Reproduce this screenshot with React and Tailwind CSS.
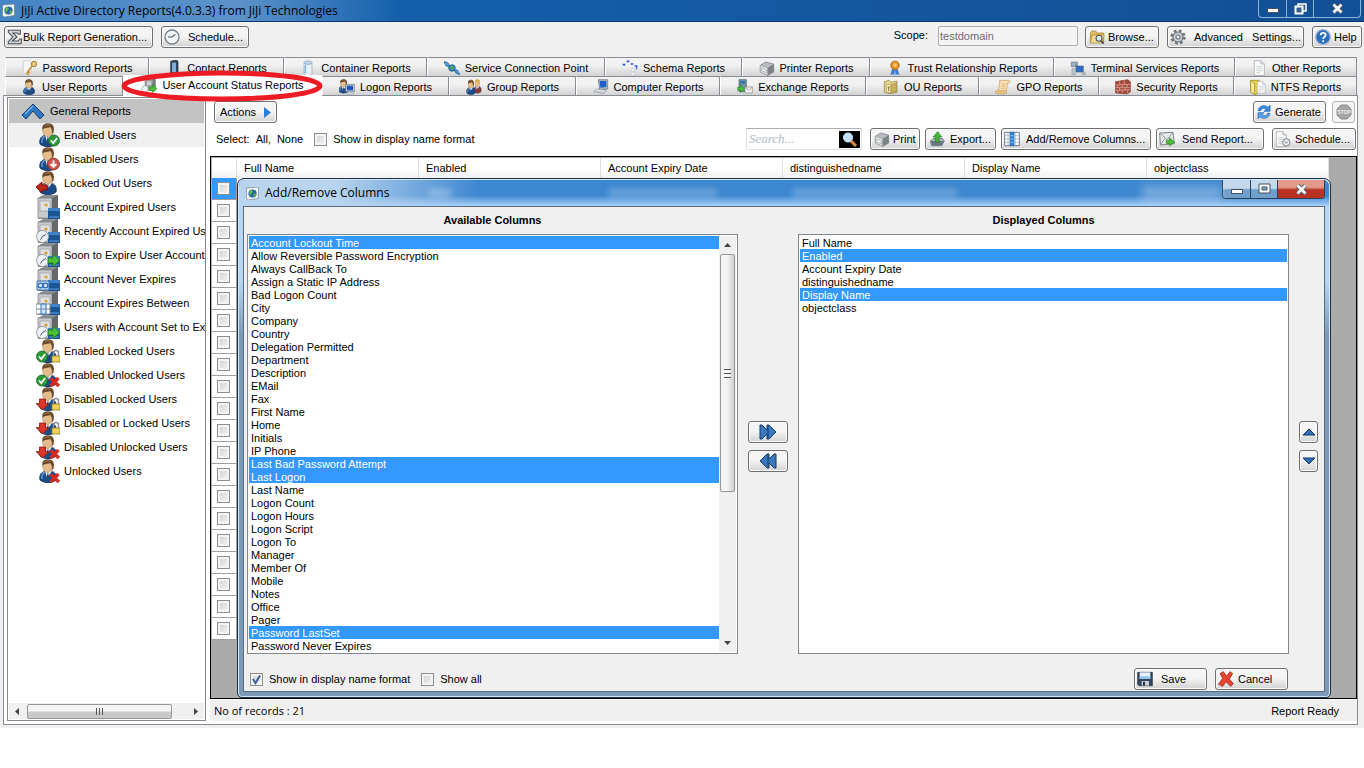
import React, { useState } from 'react';

/* ---------- icons ---------- */

const Svg = ({ size = 16, box = 24, className = '', children }) => (
  <svg width={size} height={size} viewBox={`0 0 ${box} ${box}`} className={`shrink-0 ${className}`} aria-hidden="true">
    {children}
  </svg>
);

const Person = ({ t = '', hair = '#6b4a2b', coat = '#1d4b86' }) => (
  <g transform={t}>
    <path d="M4 21c-1-5 1-8 6-9h5c4 1 6 4 5 9-4 3.500-12 3.500-16 0z" fill={coat} stroke="#0d2d57" strokeWidth=".8" />
    <path d="M6 20c-.5-4 1-6 3-7" stroke="#5b8fca" strokeWidth="1.800" fill="none" />
    <path d="M9 12l2 7 5-7-3-1z" fill="#f3f6fa" />
    <path d="M12 13l-1.500 5 1 3 1.500-3z" fill="#27466f" />
    <ellipse cx="11.500" cy="7.500" rx="4.800" ry="6" fill="#e5bd8c" stroke="#a9804f" strokeWidth=".6" />
    <path d="M6.500 7C5.500 2.500 8 .3 12 .3c4.500 0 7 3 5.500 9.200l-1.500 2c.5-4-.5-6.500-2-7.500-2.500 1.500-6 0-7.500 3z" fill={hair} />
    <path d="M9 2.500c2-1.200 4-1 5.500 0" stroke="#a57c50" strokeWidth="1" fill="none" />
  </g>
);

const Cabinet = () => (
  <g>
    <path d="M2 3l5-3h15v22l-4 2H2z" fill="#8c8f92" />
    <path d="M2 3h14v20H2z" fill="#c9ccce" stroke="#777a7d" strokeWidth=".7" />
    <path d="M16 3l6-3v21l-6 3z" fill="#64686b" />
    <path d="M4 6h10v10H4z" fill="#dfe1e2" stroke="#9a9d9f" strokeWidth=".7" />
    <circle cx="10" cy="10" r="1.600" fill="#d9a21f" />
    <path d="M12 13h12v11H12z" fill="#1c5594" />
    <path d="M12 13h12v3H12z" fill="#3f83c6" />
    <path d="M13 22h10" stroke="#5c9ada" />
  </g>
);

const CheckBadge = ({ x, y }) => (
  <g>
    <circle cx={x} cy={y} r="5.500" fill="#2f9a3a" stroke="#1a6a25" strokeWidth=".8" />
    <path d={`M${x - 3} ${y}l2.200 2.500 4-5`} stroke="#fff" strokeWidth="1.800" fill="none" />
  </g>
);
const DownBadge = ({ x, y }) => (
  <g>
    <circle cx={x} cy={y} r="6" fill="#c9534d" stroke="#8e2d29" strokeWidth=".8" />
    <path d={`M${x} ${y - 3.5}v6M${x - 3} ${y}l3 3 3-3`} stroke="#fff" strokeWidth="1.800" fill="none" />
  </g>
);
const RedDown = () => (
  <path d="M3.500 12h6v4.500H13L6.500 23 0 16.500h3.500z" fill="#d9372a" stroke="#8a1a12" strokeWidth=".8" />
);
const Lock = () => (
  <g>
    <path d="M17.500 17v-3a2.500 2.500 0 015 0v3" stroke="#8d9299" strokeWidth="1.500" fill="none" />
    <path d="M16 17h8v6h-8z" fill="#ecd35f" stroke="#9a7f1c" strokeWidth=".8" />
  </g>
);
const RedCross = () => <path d="M14.500 15.500l8.500 7.500M22.500 15l-8 8" stroke="#d42a20" strokeWidth="3.400" />;
const Clock = () => (
  <g>
    <circle cx="6.500" cy="17.500" r="6" fill="#eef1f3" stroke="#9aa1a7" />
    <path d="M6.500 17.500l3.500-2M6.500 17.500l-2 3" stroke="#4b5563" />
  </g>
);
const GreenRight = ({ t = '' }) => (
  <path transform={t} d="M12 15h5v-4l7 6.500-7 6V20h-5z" fill="#4bbf35" stroke="#1f7a17" strokeWidth=".8" />
);

const sideIcons = {
  enabled: <><Person /><CheckBadge x={18} y={17.5} /></>,
  disabled: <><Person /><DownBadge x={17.5} y={17} /></>,
  lockedOut: <><Person /><path d="M0 16l6-5v3h5v5H6v3z" fill="#c4261d" stroke="#7a120d" /></>,
  expired: <Cabinet />,
  recent: <><Cabinet /><Clock /></>,
  soon: <><Cabinet /><Clock /><GreenRight /></>,
  never: <><Cabinet /><path d="M1 14h12v9H1z" fill="#cfe0f2" stroke="#2f6cb0" /><circle cx="4.500" cy="18.500" r="2.400" fill="none" stroke="#2f6cb0" strokeWidth="1.300" /><circle cx="9.500" cy="18.500" r="2.400" fill="none" stroke="#2f6cb0" strokeWidth="1.300" /></>,
  between: <><Cabinet /><path d="M0 13h14v10H0z" fill="#fff" stroke="#7b8794" /><path d="M5 13h5v10H5z" fill="#cfe3fb" stroke="#2c72c7" /><path d="M0 18h14" stroke="#7b8794" /></>,
  enLocked: <><Person /><CheckBadge x={6} y={17.5} /><Lock /></>,
  enUnlocked: <><Person /><CheckBadge x={6} y={17.5} /><RedCross /></>,
  disLocked: <><Person /><RedDown /><Lock /></>,
  disUnlocked: <><Person /><RedDown /><RedCross /></>,
  unlocked: <><Person /><RedCross /></>,
};

const Monitor = ({ t = '' }) => (
  <g transform={t}>
    <path d="M10 8h13v11H10z" fill="#c4cad1" stroke="#6d7782" />
    <path d="M12 10h9v7h-9z" fill="#1f55c0" />
    <path d="M13 20h8l1 3H12z" fill="#dfe3e7" stroke="#8a929b" strokeWidth=".7" />
  </g>
);
const Page = ({ t = '' }) => (
  <g transform={t}>
    <path d="M5 1h10l5 5v17H5z" fill="#fafafa" stroke="#9aa0a6" />
    <path d="M15 1v5h5" fill="#e3e6e9" stroke="#9aa0a6" />
    <path d="M8 10h9M8 13h9M8 16h9M8 19h6" stroke="#b7bcc2" />
  </g>
);
const PrinterShape = () => (
  <g>
    <path d="M2 8l8-5 12 3v12l-9 5-11-5z" fill="#b8bcc0" stroke="#6f7478" />
    <path d="M2 8l11 4v11L2 18z" fill="#e4e6e8" stroke="#8b9094" strokeWidth=".7" />
    <path d="M13 12l9-6v12l-9 5z" fill="#7d8286" />
    <path d="M4 12l7 3v4l-7-3z" fill="#fff" stroke="#777" strokeWidth=".7" />
  </g>
);
const Folder = () => (
  <g>
    <path d="M2 6l2-3h6l2 3h10v14H2z" fill="#e2bc62" stroke="#9d7a28" />
    <path d="M5 9h18l-3 12H2z" fill="#f5dc94" stroke="#a9852e" />
  </g>
);

const tabIcons = {
  password: <><path d="M2 1h9l3 3v16H2z" fill="#f7f7f7" stroke="#c5c9cd" /><circle cx="18" cy="6" r="4" fill="#e8c67c" stroke="#9c7833" strokeWidth="1.400" /><path d="M15 9L7 20M9 17l3 2M7 20l3 2" stroke="#c89236" strokeWidth="2.600" fill="none" /></>,
  contact: <><path d="M7 2l8-2 3 2v20l-3 2H7z" fill="#33475c" stroke="#17222e" /><path d="M9 4h6v14H9z" fill="#7fb0da" /><path d="M9 20h6" stroke="#9fb0bf" strokeWidth="1.500" /></>,
  container: <><path d="M6 4v17c2 3 10 3 12 0V4z" fill="#e8f1f8" stroke="#8ea4b5" /><ellipse cx="12" cy="4" rx="6" ry="2.600" fill="#bcd9ee" stroke="#7f9bb0" /><path d="M8 8v12" stroke="#86b9dc" strokeWidth="2.400" /></>,
  service: <><path d="M0 2l6 2 3 6-6-1zM15 15l5 0 4 7-6-2z" fill="#4a9fd6" stroke="#18608f" /><circle cx="12" cy="12" r="5" fill="#2b83c3" stroke="#1b4f7b" /><path d="M9 10c3-3 5 0 6 1s-2 4-4 4z" fill="#56b04a" /></>,
  schema: <><path d="M1 7h4M7 2h4M13 6h4M19 9h4" stroke="#2f52e0" strokeWidth="2.600" /><path d="M22 9v5" stroke="#2f52e0" strokeWidth="1.600" /><path d="M14 13h5v4h-5zM14 19h5v4h-5z" fill="#f1f3f5" stroke="#c5ccd4" /></>,
  printer: <PrinterShape />,
  trust: <><path d="M8 12l-3 11 4-2 2 2 1-9 1 9 3-2 3 2-4-11z" fill="#3a7bd0" /><circle cx="12" cy="8" r="6.500" fill="#e0912a" stroke="#a55f10" /><circle cx="12" cy="8" r="3" fill="#f7c267" /></>,
  terminal: <><path d="M2 3h9v7H2z" fill="#9fb0bf" stroke="#66727d" /><path d="M8 7l10 7" stroke="#7c8792" strokeWidth="2" /><path d="M9 9h11v9H9z" fill="#2e6bc7" stroke="#5d6974" /><path d="M3 13h5v9H3zM18 19h5v3h-5z" fill="#c0c7ce" stroke="#79838c" strokeWidth=".7" /></>,
  other: <Page />,
  user: <Person />,
  status: <><path d="M6 2l4-2h12v20H6z" fill="#75797c" /><path d="M6 3h12v17H6z" fill="#a4a8ab" stroke="#666" strokeWidth=".7" /><path d="M8 6h8v7H8z" fill="#cfd2d4" stroke="#777" strokeWidth=".7" /><circle cx="6" cy="18" r="5" fill="#eef1f3" stroke="#9aa1a7" /><GreenRight /></>,
  logon: <><Person t="translate(-4 0) scale(.9)" /><Monitor /></>,
  group: <><Person t="translate(9 0) scale(.68 .9)" hair="#e0b84c" coat="#9c3326" /><Person t="translate(-2 1) scale(.78 .95)" /></>,
  computer: <><path d="M8 1l14 0v14l-12 1z" fill="#aeb6bf" stroke="#646d77" /><path d="M10 3h10v9l-9 1z" fill="#1f5fc8" /><path d="M1 19l5-4 14 2-4 5z" fill="#eceff1" stroke="#808890" /><path d="M5 18l11 2" stroke="#9aa2aa" /></>,
  exchange: <><path d="M3 1h11v18H3z" fill="#7594a3" stroke="#3e5763" /><path d="M5 3h7v4H5z" fill="#3577b5" /><path d="M12 12h11v9H12z" fill="#f1f1ee" stroke="#888" /><path d="M12 12l5.500 5 5.500-5" fill="none" stroke="#888" /><GreenRight t="translate(-10 -1) scale(.9)" /></>,
  ou: <><path d="M2 4l7-2 3 3 9-2v17l-12 2-7-2z" fill="#ead590" stroke="#8f7a35" /><path d="M5 8h7v13l-7-2z" fill="#f6ecc2" stroke="#9d8638" strokeWidth=".8" /><path d="M12 9l8-3v13l-8 2z" fill="#cdb35e" stroke="#8f7a35" strokeWidth=".8" /><path d="M7 12h3M8.500 12v6" stroke="#8a7a2c" strokeWidth="1.600" /></>,
  gpo: <><path d="M7 2h14c2 0 2 4 0 4h-2l-2 12H5L7 6z" fill="#f6dfb4" stroke="#c49a55" /><path d="M1 18h15c2 0 2 4 0 4H3c-2 0-3-2-2-4z" fill="#edc88a" stroke="#c49a55" /><path d="M10 8h6M9 11h6M9 14h6" stroke="#d2a866" /></>,
  security: <><path d="M1 4l18-3 4 3v15l-4 3L1 21z" fill="#a9493a" stroke="#74291e" /><path d="M1 9l22-1M1 13h22M1 17l22-1M7 3v6M14 2v6M4 9v4M11 9v4M18 8v5M7 13v4M15 13v4M4 17v4M11 17v4M19 17v4" stroke="#dcaaa0" strokeWidth="1.200" /></>,
  ntfs: <><path d="M1 2h13v18l-7 4-6-5z" fill="#ecd14c" stroke="#95801d" /><path d="M1 2l6 5v17l-6-5z" fill="#f8ea98" stroke="#95801d" /><Page t="translate(7 3) scale(.8)" /></>,
};

const AppIcon = () => (
  <Svg size={13}>
    <path d="M1 2l22-2v21l-19 3-3-3z" fill="#f4f6f7" stroke="#5a6a74" />
    <circle cx="12" cy="12" r="7.500" fill="#2166a8" />
    <path d="M7 7c3-3 6 0 5 3s-4 1-3 5-3-1-3-4zM14 13c3-2 5-1 4 2s-4 4-4 1z" fill="#6dbb3f" />
  </Svg>
);

const btnIcons = {
  bulk: <path d="M2 2h18v6h-3l-1-2H9l6 6-7 6h9l2-3h3l-1 7H2v-3l7-7-7-7z" fill="#d4d8db" stroke="#4a5056" strokeWidth="1.600" />,
  clock: <><circle cx="12" cy="12" r="10.500" fill="#f2f4f6" stroke="#7a828a" strokeWidth="2" /><path d="M6 12h6l5-4" stroke="#49515a" strokeWidth="1.600" fill="none" /></>,
  browse: <><Folder /><circle cx="15" cy="14" r="4.500" fill="#d8ebf8" stroke="#555" strokeWidth="1.600" /><path d="M18 18l4 4" stroke="#444" strokeWidth="2.400" /></>,
  gear: <><circle cx="12" cy="12" r="9.500" fill="none" stroke="#6d757c" strokeWidth="4" strokeDasharray="4 3.460" /><circle cx="12" cy="12" r="7.500" fill="#c5cbd0" stroke="#6d757c" strokeWidth="1.600" /><circle cx="12" cy="12" r="3" fill="#f0f0f0" stroke="#6d757c" strokeWidth="1.600" /></>,
  help: <><circle cx="12" cy="12" r="11" fill="#2a6fbd" stroke="#9db5cc" strokeWidth="2" /><path d="M8.500 9.500c0-5 7.500-4.500 7.500-.5 0 3-3.700 2.700-3.700 6M12.300 17v2.500" stroke="#fff" strokeWidth="2.600" fill="none" /></>,
  generate: <><path d="M3 10C4 3 13 0 18 5l3-3v9h-9l3-3c-4-3-7-1-8 2z" fill="#3a8be0" stroke="#1a5fae" /><path d="M21 14c-1 7-10 10-15 5l-3 3v-9h9l-3 3c4 3 7 1 8-2z" fill="#5aa6ee" stroke="#1a5fae" /></>,
  print: <PrinterShape />,
  exportOut: <><path d="M2 15l5-4h13l3 4-4 7H4z" fill="#a8b0b8" stroke="#59626b" /><path d="M2 15h17l4 0-4 7H4z" fill="#6d7a86" /><path d="M10 17V9H6l7-8 6 8h-4v8z" fill="#48b63a" stroke="#1f7a17" /></>,
  columns: <><path d="M1 2h22v20H1z" fill="#fff" stroke="#6c7b8b" strokeWidth="1.500" /><path d="M1 7h22M1 12h22M1 17h22M6 2v20M17 2v20" stroke="#9eabb8" /><path d="M9 2h6v20H9z" fill="#3587dc" stroke="#1c5ea8" /><path d="M9 7h6M9 12h6M9 17h6" stroke="#9cc8f4" /></>,
  send: <><path d="M1 3l20-1 2 17-21 2z" fill="#e6e8ea" stroke="#6d757c" strokeWidth="1.300" /><path d="M1 3l11 10L21 2M2 21l7-10M22 19l-8-8" stroke="#8a9299" fill="none" strokeWidth="1.300" /><GreenRight t="translate(-1 -1)" /></>,
  pageClock: <><Page t="translate(-3 0)" /><circle cx="17" cy="17" r="5.500" fill="#eef0f2" stroke="#7a828a" strokeWidth="1.500" /><path d="M14 16l3 2 3-2" stroke="#555" fill="none" /></>,
  save: <><path d="M1 2h22v20H3l-2-2z" fill="#34475c" stroke="#1a2735" /><path d="M4 2h16v10H4z" fill="#e6f1fa" /><path d="M4 8h16v4H4z" fill="#8fc3ec" /><path d="M7 15h11v7H7z" fill="#c5ccd2" /><path d="M9 16h3v6H9z" fill="#26323e" /></>,
  cancel: <path d="M3 4l5-3 5 7 5-7 4 3-5 8 6 7-4 4-7-7-5 7-6-3 6-9z" fill="#e8432e" stroke="#a82717" strokeWidth="1.200" />,
};

/* ---------- data ---------- */

const topTabs = [
  { label: 'Password Reports', icon: 'password', w: 'basis-[144px]' },
  { label: 'Contact Reports', icon: 'contact', w: 'basis-[135px]' },
  { label: 'Container Reports', icon: 'container', w: 'basis-[143px]' },
  { label: 'Service Connection Point', icon: 'service', w: 'basis-[178px]' },
  { label: 'Schema Reports', icon: 'schema', w: 'basis-[137px]' },
  { label: 'Printer Reports', icon: 'printer', w: 'basis-[128px]' },
  { label: 'Trust Relationship Reports', icon: 'trust', w: 'basis-[184px]' },
  { label: 'Terminal Services Reports', icon: 'terminal', w: 'basis-[181px]' },
  { label: 'Other Reports', icon: 'other', w: 'basis-[122px]' },
];

const bottomTabs = [
  { label: 'User Reports', icon: 'user', w: 'basis-[118px]' },
  { label: 'User Account Status Reports', icon: 'status', w: 'basis-[199px]' },
  { label: 'Logon Reports', icon: 'logon', w: 'basis-[127px]' },
  { label: 'Group Reports', icon: 'group', w: 'basis-[127px]' },
  { label: 'Computer Reports', icon: 'computer', w: 'basis-[144px]' },
  { label: 'Exchange Reports', icon: 'exchange', w: 'basis-[146px]' },
  { label: 'OU Reports', icon: 'ou', w: 'basis-[113px]' },
  { label: 'GPO Reports', icon: 'gpo', w: 'basis-[120px]' },
  { label: 'Security Reports', icon: 'security', w: 'basis-[135px]' },
  { label: 'NTFS Reports', icon: 'ntfs', w: 'basis-[123px]' },
];

const reports = [
  ['Enabled Users', 'enabled'],
  ['Disabled Users', 'disabled'],
  ['Locked Out Users', 'lockedOut'],
  ['Account Expired Users', 'expired'],
  ['Recently Account Expired Us', 'recent'],
  ['Soon to Expire User Account', 'soon'],
  ['Account Never Expires', 'never'],
  ['Account Expires Between', 'between'],
  ['Users with Account Set to Exp', 'soon'],
  ['Enabled Locked Users', 'enLocked'],
  ['Enabled Unlocked Users', 'enUnlocked'],
  ['Disabled Locked Users', 'disLocked'],
  ['Disabled or Locked Users', 'disLocked'],
  ['Disabled Unlocked Users', 'disUnlocked'],
  ['Unlocked Users', 'unlocked'],
];

const available = [
  'Account Lockout Time', 'Allow Reversible Password Encryption', 'Always CallBack To',
  'Assign a Static IP Address', 'Bad Logon Count', 'City', 'Company', 'Country',
  'Delegation Permitted', 'Department', 'Description', 'EMail', 'Fax', 'First Name', 'Home',
  'Initials', 'IP Phone', 'Last Bad Password Attempt', 'Last Logon', 'Last Name', 'Logon Count',
  'Logon Hours', 'Logon Script', 'Logon To', 'Manager', 'Member Of', 'Mobile', 'Notes', 'Office',
  'Pager', 'Password LastSet', 'Password Never Expires',
];

const displayed = ['Full Name', 'Enabled', 'Account Expiry Date', 'distinguishedname', 'Display Name', 'objectclass'];

const rows = Array.from({ length: 21 }, (_, i) => i);

/* ---------- small controls ---------- */

const Button = ({ icon, iconSize = 16, children, className = '', ...rest }) => (
  <button
    type="button"
    className={`flex h-[22px] shrink-0 items-center rounded-[3px] border border-[#707070] bg-linear-to-b from-[#f5f5f5] from-45% to-[#d2d2d2] whitespace-nowrap shadow-[inset_0_0_0_1px_#fafafa] ${className}`}
    {...rest}
  >
    {icon && <Svg size={iconSize}>{btnIcons[icon]}</Svg>}
    {children}
  </button>
);

const Checkbox = ({ id, label, defaultChecked, name }) => (
  <span className="flex items-center gap-[6px] whitespace-nowrap">
    <span className="grid">
      <input
        id={id}
        type="checkbox"
        aria-label={label ? undefined : name}
        defaultChecked={defaultChecked}
        className="peer col-start-1 row-start-1 size-[13px] appearance-none border border-[#8e8f8f] bg-linear-to-br from-[#cdd0d4] to-[#f6f6f6] shadow-[inset_0_0_0_2px_#f4f4f4]"
      />
      <svg viewBox="0 0 13 13" className="pointer-events-none invisible col-start-1 row-start-1 size-[13px] peer-checked:visible" aria-hidden="true">
        <path d="M3 6l2.500 4L10 2.500" fill="none" stroke="#3a5f9a" strokeWidth="2" />
      </svg>
    </span>
    {label && <label htmlFor={id}>{label}</label>}
  </span>
);

const Tab = ({ tab, active, onClick }) => (
  <button
    type="button"
    role="tab"
    aria-selected={active}
    onClick={onClick}
    className={`flex h-[19px] grow items-center justify-center gap-[5px] whitespace-nowrap ${tab.w} ${
      active
        ? 'relative -mt-px h-[21px] bg-white pb-[2px]'
        : 'border-t border-r border-l border-[#898c95] border-l-white bg-linear-to-b from-[#f2f2f2] from-40% to-[#d3d3d3] pt-px'
    }`}
  >
    <Svg>{tabIcons[tab.icon]}</Svg>
    {tab.label}
    {active && (
      <svg viewBox="0 0 203 32" preserveAspectRatio="none" className="pointer-events-none absolute -inset-x-[2px] -top-[5px] z-10 h-[32px] w-[203px]" aria-hidden="true">
        <ellipse cx="101" cy="16" rx="98" ry="13" fill="none" stroke="#ed1c24" strokeWidth="5" />
      </svg>
    )}
  </button>
);

const WindowButtons = ({ blue, maximized }) => (
  <div className={`flex self-start overflow-hidden rounded-b-[4px] border border-t-0 ${blue ? 'h-[19px] border-[#2b3f57]' : 'h-[18px] border-[#8fb2d8]'}`}>
    <button type="button" aria-label="Minimize" className={`flex w-[28px] items-center justify-center border-r pt-[4px] ${blue ? 'border-[#2b3f57] bg-linear-to-b from-[#c4d9ec] from-45% to-[#6f9fcb] to-55%' : 'border-[#8fb2d8]'}`}>
      <span className="h-[5px] w-[12px] border border-[#47525f] bg-white" />
    </button>
    <button type="button" aria-label={maximized ? 'Restore' : 'Maximize'} className={`flex w-[27px] items-center justify-center border-r ${blue ? 'border-[#2b3f57] bg-linear-to-b from-[#c4d9ec] from-45% to-[#6f9fcb] to-55%' : 'border-[#8fb2d8]'}`}>
      <svg width="13" height="12" viewBox="0 0 13 12" aria-hidden="true">
        {maximized ? (
          <>
            <path d="M4 1h8v7H4z" fill="#345f92" stroke="#fff" strokeWidth="1.500" />
            <path d="M1.500 3.500h7v7h-7z" fill="#345f92" stroke="#fff" strokeWidth="2" />
          </>
        ) : (
          <>
            <path d="M1 1h11v9H1z" fill="#fff" stroke="#47525f" />
            <path d="M4 4h5v3H4z" fill="#7da7cf" stroke="#47525f" />
          </>
        )}
      </svg>
    </button>
    <button type="button" aria-label="Close" className={`flex w-[46px] items-center justify-center ${blue ? 'bg-linear-to-b from-[#e39a8b] from-40% to-[#b83122] to-55%' : ''}`}>
      <svg width="13" height="11" viewBox="0 0 13 11" aria-hidden="true">
        <path d="M2.500 1.500l8 8M10.500 1.500l-8 8" stroke="#47525f" strokeWidth="4.500" />
        <path d="M2.500 1.500l8 8M10.500 1.500l-8 8" stroke="#fff" strokeWidth="2.800" />
      </svg>
    </button>
  </div>
);

const ListBox = ({ label, items, initial, scroll }) => {
  const [selected, setSelected] = useState(initial);

  const toggle = (item) => {
    setSelected(selected.includes(item) ? selected.filter((s) => s !== item) : [...selected, item]);
  };

  return (
    <section className="flex min-w-0 flex-1 flex-col">
      <h2 className="h-[27px] text-center leading-[27px] font-bold">{label}</h2>
      <div className="flex flex-1 border border-[#828790] bg-white p-px">
        <ul role="listbox" aria-label={label} aria-multiselectable="true" className="min-w-0 flex-1">
          {items.map((item) => (
            <li
              key={item}
              role="option"
              aria-selected={selected.includes(item)}
              onClick={() => toggle(item)}
              className={`h-[13px] pl-[2px] leading-[14px] whitespace-nowrap ${selected.includes(item) ? 'bg-[#3399ff] text-white' : ''}`}
            >
              {item}
            </li>
          ))}
        </ul>
        {scroll && (
          <div className="flex w-[17px] flex-col items-center bg-[#f0f0f0]">
            <svg width="7" height="4" viewBox="0 0 7 4" className="my-[7px]" aria-hidden="true"><path d="M0 4l3.500-4L7 4z" fill="#444" /></svg>
            <div className="flex h-[238px] w-[15px] flex-col items-center justify-center gap-px rounded-[2px] border border-[#979797] bg-linear-to-r from-[#f5f5f5] from-45% to-[#cfcfcf]">
              <span className="h-px w-[7px] bg-[#555]" />
              <span className="h-px w-[7px] bg-white" />
              <span className="h-px w-[7px] bg-[#555]" />
              <span className="h-px w-[7px] bg-white" />
              <span className="h-px w-[7px] bg-[#555]" />
            </div>
            <svg width="7" height="4" viewBox="0 0 7 4" className="mt-auto mb-[7px]" aria-hidden="true"><path d="M0 0h7L3.500 4z" fill="#444" /></svg>
          </div>
        )}
      </div>
    </section>
  );
};

const Arrow = ({ d }) => (
  <svg width="16" height="16" viewBox="0 0 16 16" aria-hidden="true">
    <path d={d} fill="#2f6fb8" stroke="#15396a" strokeLinejoin="round" />
  </svg>
);

/* ---------- dialog ---------- */

const ColumnsDialog = () => (
  <div
    role="dialog"
    aria-label="Add/Remove Columns"
    className="z-10 col-start-1 row-start-1 mt-[20px] mr-[24px] ml-[25px] flex flex-col rounded-t-[7px] rounded-b-[5px] border border-[#1d2f45] bg-linear-to-b from-[#b5d5f5] from-20% to-[#7c9ab8] to-30% px-[5px] pb-[5px] shadow-[inset_0_0_0_1px_#d5e8fa]"
  >
    <header className="-mx-[4px] mt-px flex h-[26px] rounded-t-[6px] bg-linear-to-b from-[#3d87d0] from-60% to-[#a9d2f9] pr-[4px]">
      <div className="flex w-[240px] items-center gap-[6px] rounded-tl-[6px] bg-linear-to-r from-[#b9d4ee] from-40% to-transparent pl-[7px] font-['Open_Sans',sans-serif] text-[12px]">
        <AppIcon />
        <h1 className="whitespace-nowrap">Add/Remove Columns</h1>
      </div>
      {/* table row showing through the glass */}
      <div className="-ml-[50px] flex flex-1 items-center" aria-hidden="true">
        <span className="h-[8px] w-[22px] bg-white/30 blur-[3px]" />
        <span className="ml-[158px] h-[8px] w-[108px] bg-white/25 blur-[3px]" />
        <span className="ml-[76px] h-[8px] w-[164px] bg-white/25 blur-[3px]" />
        <span className="ml-auto h-[14px] w-[80px] bg-white/30 blur-[5px]" />
      </div>
      <WindowButtons blue />
    </header>

    <div className="flex flex-1 flex-col border border-[#5a6b7e] bg-[#f0f0f0] pb-px">
      <div className="flex flex-1 pr-[6px] pl-[3px]">
        <ListBox
          label="Available Columns"
          items={available}
          initial={['Account Lockout Time', 'Last Bad Password Attempt', 'Last Logon', 'Password LastSet']}
          scroll
        />
        <div className="flex flex-col justify-center gap-[7px] px-[10px] pt-[31px]">
          <Button aria-label="Add selected columns" className="w-[40px] justify-center">
            <svg width="18" height="16" viewBox="0 0 18 16" aria-hidden="true"><path d="M1 1l2 0 5 5V1h2l7 7-7 7H8v-5l-5 5H1z" fill="#3a78be" stroke="#15396a" /><path d="M9 2v12" stroke="#15396a" /></svg>
          </Button>
          <Button aria-label="Remove selected columns" className="w-[40px] justify-center">
            <svg width="18" height="16" viewBox="0 0 18 16" aria-hidden="true"><path d="M17 1l-2 0-5 5V1H8L1 8l7 7h2v-5l5 5h2z" fill="#3a78be" stroke="#15396a" /><path d="M9 2v12" stroke="#15396a" /></svg>
          </Button>
        </div>
        <ListBox label="Displayed Columns" items={displayed} initial={['Enabled', 'Display Name']} />
        <div className="flex flex-col justify-center gap-[7px] pt-[31px] pl-[10px]">
          <Button aria-label="Move up" className="w-[19px] justify-center"><Arrow d="M2 11l6-6 6 6z" /></Button>
          <Button aria-label="Move down" className="w-[19px] justify-center"><Arrow d="M2 5l6 6 6-6z" /></Button>
        </div>
      </div>
      <footer className="mt-[14px] flex items-center gap-[11px] pr-[36px] pl-[6px]">
        <Checkbox id="dlg-format" label="Show in display name format" defaultChecked />
        <Checkbox id="dlg-all" label="Show all" />
        <div className="ml-auto flex gap-[8px]">
          <Button icon="save" className="w-[73px] gap-[8px] pl-[2px]">Save</Button>
          <Button icon="cancel" className="w-[73px] gap-[4px] pl-[2px]">Cancel</Button>
        </div>
      </footer>
    </div>
  </div>
);

/* ---------- page ---------- */

const Sidebar = () => (
  <aside className="flex w-[199px] shrink-0 flex-col overflow-hidden border border-[#828790] bg-white p-px">
    <h2 className="flex h-[24px] items-center gap-[5px] bg-[#c3c3c3] pl-[12px]">
      <svg width="24" height="18" viewBox="0 0 24 18" aria-hidden="true">
        <path d="M12 2L1 13l4 4 7-8 7 8 4-4z" fill="#2f78c4" stroke="#173f73" strokeLinejoin="round" />
        <path d="M12 4L4 12" stroke="#7db4ea" strokeWidth="1.500" />
      </svg>
      General Reports
    </h2>
    <ul>
      {reports.map(([label, icon], i) => (
        <li key={label} className={`h-[24px] ${i === 0 ? 'bg-[#f0f0f0]' : ''}`}>
          <a href="#" className="flex h-full items-center gap-[4px] pl-[27px] whitespace-nowrap">
            <Svg size={24}>{sideIcons[icon]}</Svg>
            {label}
          </a>
        </li>
      ))}
    </ul>
    <div className="mt-auto flex h-[16px] items-center justify-between bg-[#f0f0f0] px-[6px]">
      <svg width="4" height="7" viewBox="0 0 4 7" aria-hidden="true"><path d="M4 0v7L0 3.500z" fill="#444" /></svg>
      <div className="mr-[14px] flex h-[15px] w-[145px] items-center justify-center gap-[2px] rounded-[2px] border border-[#979797] bg-linear-to-b from-[#f5f5f5] from-45% to-[#c9c9c9] to-55%">
        <span className="h-[7px] w-px bg-[#555]" />
        <span className="h-[7px] w-px bg-[#555]" />
        <span className="h-[7px] w-px bg-[#555]" />
      </div>
      <svg width="4" height="7" viewBox="0 0 4 7" aria-hidden="true"><path d="M0 0v7l4-3.500z" fill="#444" /></svg>
    </div>
  </aside>
);

const ReportTable = () => (
  <table className="col-start-1 row-start-1 w-[1117px] table-fixed border-separate border-spacing-0 self-start bg-white">
    <thead>
      <tr className="h-[20px] bg-linear-to-b from-white from-50% to-[#f1f1f1]">
        <th className="w-[25px] border-r border-[#dedfe1] p-0" aria-label="Select row" />
        {displayed.map((name) => (
          <th key={name} className="w-[182px] border-r border-[#dedfe1] py-0 pl-[7px] text-left leading-[19px] font-normal">{name}</th>
        ))}
      </tr>
    </thead>
    <tbody>
      {rows.map((i) => (
        <tr key={i} className="h-[22px]">
          <td className={`border-r border-b border-[#a0a0a0] p-0 pl-[5px] ${i === 0 ? 'bg-[#3399ff]' : 'bg-white'}`}>
            <Checkbox id={`row-${i}`} name={`Row ${i + 1}`} />
          </td>
          <td colSpan={6} className="p-0" />
        </tr>
      ))}
    </tbody>
  </table>
);

export default function App() {
  const [activeTab, setActiveTab] = useState('User Account Status Reports');

  return (
    <div className="min-h-screen bg-white font-['Liberation_Sans',Arial,sans-serif] text-[11px] leading-[14px] text-black">
      <div className="bg-[#f0f0f0] pb-[3px]">
        <header className="flex h-[22px] justify-between border-b border-[#0c376e] bg-linear-to-r from-[#1566b5] to-[#134f94] pr-[3px]">
          <div className="flex w-[400px] items-center gap-[6px] bg-linear-to-r from-[#4585c5] via-[#5b92c9] via-60% to-transparent pl-[2px] font-['Open_Sans',sans-serif] text-[12px]">
            <AppIcon />
            <h1 className="whitespace-nowrap">JiJi Active Directory Reports(4.0.3.3) from JiJi Technologies</h1>
          </div>
          <WindowButtons maximized />
        </header>

        <div className="flex h-[35px] items-start gap-[8px] pt-[4px] pr-[2px] pl-[4px]">
          <Button icon="bulk" className="w-[149px] pl-[2px]">Bulk Report Generation...</Button>
          <Button icon="clock" className="w-[88px] gap-[8px] pl-[2px]">Schedule...</Button>
          <label htmlFor="scope" className="mr-[2px] ml-auto pt-[2px]">Scope:</label>
          <input
            id="scope"
            defaultValue="testdomain"
            disabled
            className="mr-[-1px] h-[20px] w-[140px] rounded-[2px] border border-[#afafaf] bg-[#f4f4f4] px-px text-[#6d6d6d]"
          />
          <Button icon="browse" className="w-[74px] gap-[3px] pl-[3px]">Browse...</Button>
          <Button icon="gear" className="w-[137px] gap-[8px] pl-[2px] whitespace-pre">{'Advanced   Settings...'}</Button>
          <Button icon="help" className="w-[50px] gap-[3px] pl-[2px]">Help</Button>
        </div>

        <nav role="tablist" className="pr-[7px] pl-[5px]">
          <div className="flex">
            {topTabs.map((tab) => (
              <Tab key={tab.label} tab={tab} active={activeTab === tab.label} onClick={() => setActiveTab(tab.label)} />
            ))}
          </div>
          <div className="flex h-[19px]">
            {bottomTabs.map((tab) => (
              <Tab key={tab.label} tab={tab} active={activeTab === tab.label} onClick={() => setActiveTab(tab.label)} />
            ))}
          </div>
        </nav>

        <div className="mr-[6px] ml-[3px] flex gap-[4px] border border-[#898c95] bg-white pt-px pb-[3px] pl-[3px]">
          <Sidebar />

          <main className="flex min-w-0 flex-1 flex-col pt-[4px]">
            <div className="flex items-center gap-[6px] pr-[2px] pl-[4px]">
              <Button className="mr-auto w-[63px] justify-between px-[5px]">
                Actions
                <svg width="8" height="11" viewBox="0 0 8 11" aria-hidden="true"><path d="M1 0l7 5.500L1 11z" fill="#2a80d8" /></svg>
              </Button>
              <Button icon="generate" className="w-[73px] gap-[3px] pl-[2px]">Generate</Button>
              <button type="button" disabled aria-label="Stop" className="flex h-[22px] w-[23px] items-center justify-center rounded-[3px] border border-[#b5b5b5] bg-[#f4f4f4]">
                <svg width="16" height="16" viewBox="0 0 16 16" aria-hidden="true">
                  <path d="M5 1h6l4 4v6l-4 4H5l-4-4V5z" fill="#a6a6a6" stroke="#8c8c8c" />
                  <text x="8" y="10" fontSize="5" fontWeight="bold" textAnchor="middle" fill="#eee">STOP</text>
                </svg>
              </button>
            </div>

            <div className="mt-[5px] flex items-center gap-[5px] pr-px pl-[6px]">
              <span className="flex items-center gap-[6px] whitespace-nowrap">
                Select:
                <a href="#">All,</a>
                <a href="#">None</a>
              </span>
              <span className="ml-[6px]"><Checkbox id="format" label="Show in display name format" /></span>
              <div className="mr-[3px] ml-auto flex h-[22px] w-[116px] items-center border border-[#e3e3e3] border-t-[#abadb3] bg-white pr-px">
                <input
                  aria-label="Search"
                  placeholder="Search..."
                  className="min-w-0 flex-1 pl-[2px] font-['Liberation_Serif',serif] text-[13px] italic outline-none placeholder:text-[#b4bcc8]"
                />
                <button type="button" aria-label="Run search" className="flex h-[17px] w-[21px] items-center justify-center bg-black">
                  <svg width="16" height="15" viewBox="0 0 16 15" aria-hidden="true">
                    <path d="M9 9l5 5" stroke="#e08a3a" strokeWidth="3" />
                    <circle cx="6" cy="5.500" r="4.500" fill="#bfe0fa" stroke="#e6f2fb" />
                  </svg>
                </button>
              </div>
              <Button icon="print" className="w-[50px] gap-[3px] pl-[3px]">Print</Button>
              <Button icon="exportOut" className="w-[71px] gap-[5px] pl-[3px]">Export...</Button>
              <Button icon="columns" className="w-[150px] gap-[6px] border-[#2f7fc4] pl-[2px] shadow-[inset_0_0_0_1px_#6fd0f5]">Add/Remove Columns...</Button>
              <Button icon="send" className="mr-[3px] w-[108px] gap-[7px] pl-[2px]">Send Report...</Button>
              <Button icon="pageClock" className="w-[84px] gap-[4px] pl-[2px]">Schedule...</Button>
            </div>

            <div className="mt-[6px] grid border border-black bg-[#ababab] px-px pt-px">
              <ReportTable />
              <ColumnsDialog />
            </div>

            <footer className="mt-px flex h-[21px] items-center justify-between bg-[#f0f0f0] pr-[18px] pl-[4px]">
              <span className="font-['Open_Sans',sans-serif]">No of records : 21</span>
              <span>Report Ready</span>
            </footer>
          </main>
        </div>
      </div>
    </div>
  );
}
